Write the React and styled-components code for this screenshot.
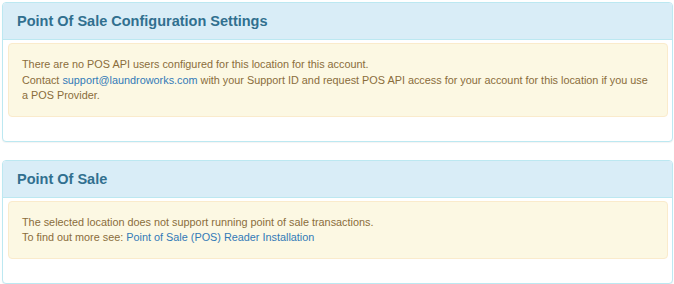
import React from "react";
import styled, { createGlobalStyle } from "styled-components";

const Global = createGlobalStyle`
  html, body { margin: 0; padding: 0; background: #fff; }
  body { font-family: "Liberation Sans", Arial, sans-serif; font-size: 10.85px; }
`;

const Page = styled.div`
  padding: 2px 1px 0 2px;
  display: flex;
  flex-direction: column;
  gap: 18px;
`;

const Panel = styled.section`
  border: 1px solid #bce8f1;
  border-radius: 4px;
  background: #fff;
  box-shadow: 0 1px 1px rgba(0, 0, 0, 0.05);
`;

const Heading = styled.div`
  background: #d9edf7;
  border-bottom: 1px solid #bce8f1;
  border-radius: 3px 3px 0 0;
  padding: 10px 14px 9px;
`;

const Title = styled.h3`
  margin: 0;
  color: #31708f;
  font-size: 14.5px;
  font-weight: bold;
  line-height: 17px;
`;

const Body = styled.div`
  padding: 3px 4px 4px 5px;
`;

const Alert = styled.div`
  background: #fcf8e3;
  border: 1px solid #faebcc;
  border-radius: 4px;
  color: #8a6d3b;
  padding: 13px 16px 12px 13px;
  line-height: 15.6px;
  margin-bottom: 20px;
`;

const Link = styled.a`
  color: #337ab7;
  text-decoration: none;
`;

export default function App() {
  return (
    <>
      <Global />
      <Page>
        <Panel>
          <Heading>
            <Title>Point Of Sale Configuration Settings</Title>
          </Heading>
          <Body>
            <Alert>
              There are no POS API users configured for this location for this account.
              <br />
              Contact <Link href="#">support@laundroworks.com</Link> with your Support ID and request POS API access for your account for this location if you use a POS Provider.
            </Alert>
          </Body>
        </Panel>
        <Panel>
          <Heading>
            <Title>Point Of Sale</Title>
          </Heading>
          <Body>
            <Alert>
              The selected location does not support running point of sale transactions.
              <br />
              To find out more see: <Link href="#">Point of Sale (POS) Reader Installation</Link>
            </Alert>
          </Body>
        </Panel>
      </Page>
    </>
  );
}
